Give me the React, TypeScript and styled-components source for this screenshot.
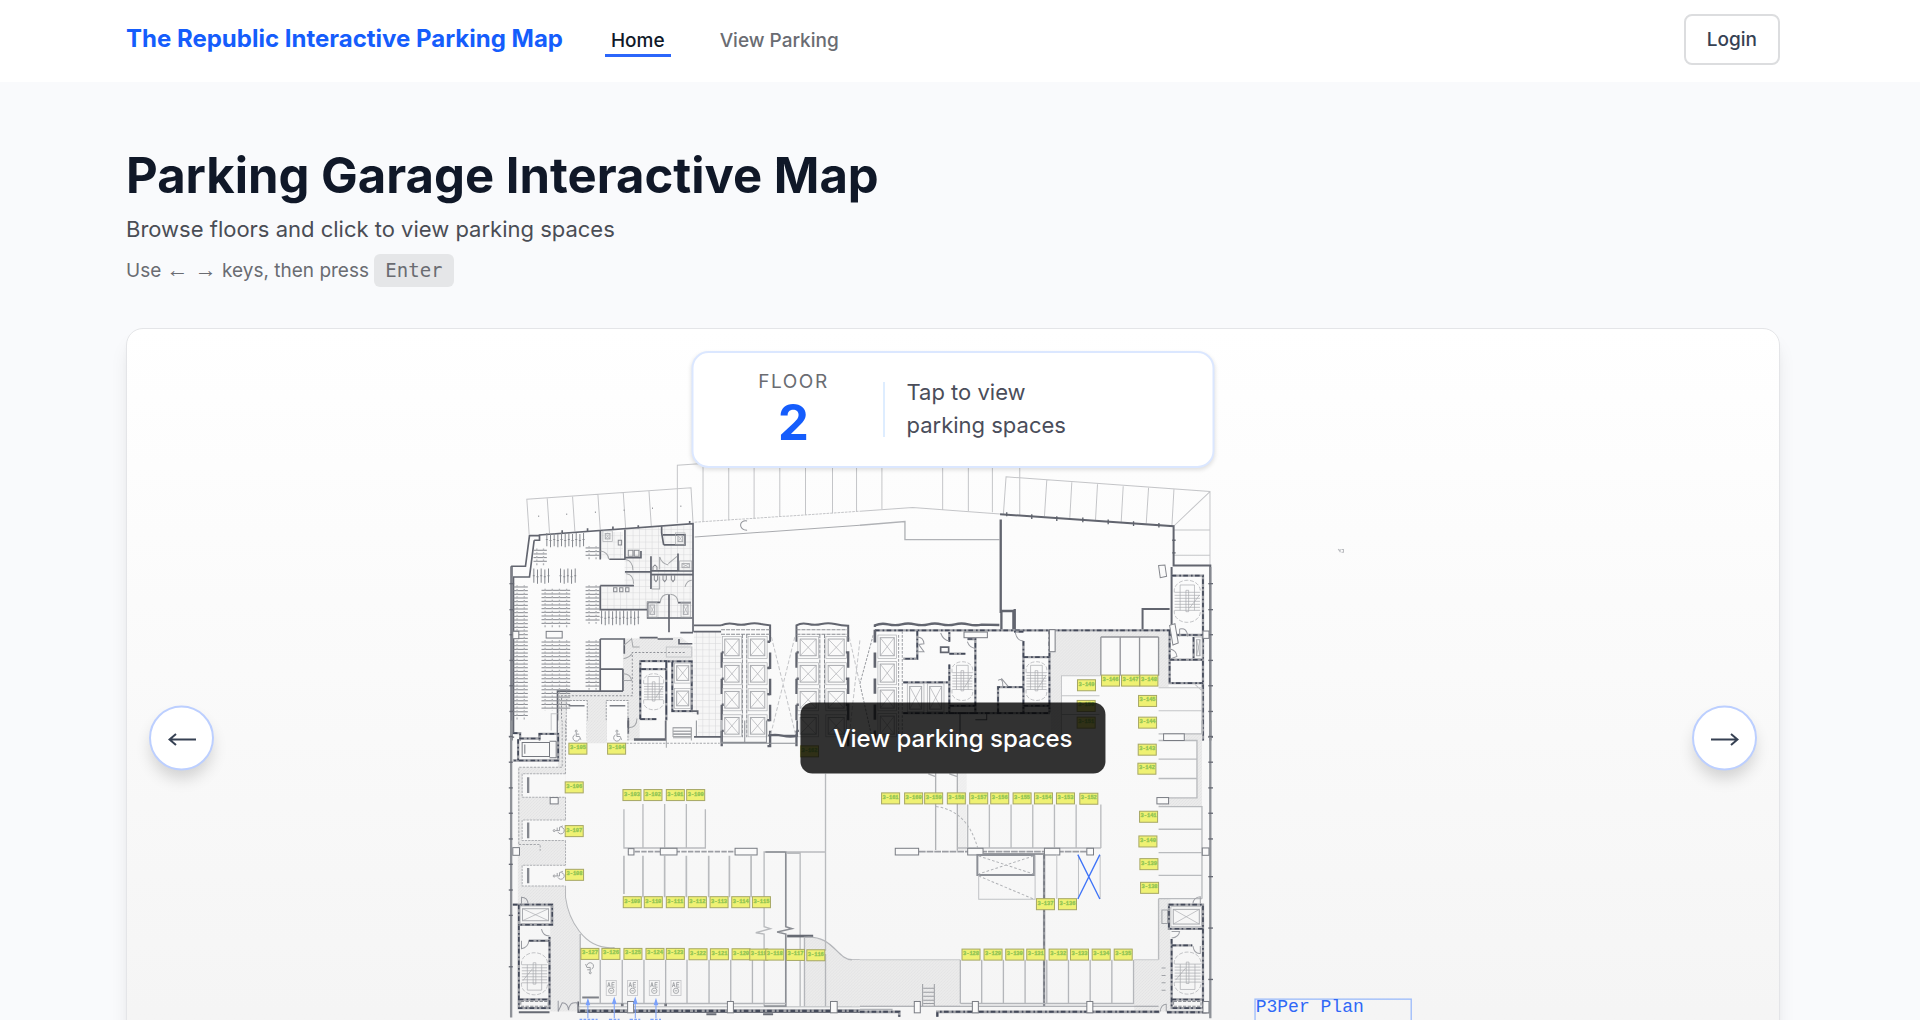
import React, { useState } from "react";
import styled, { createGlobalStyle } from "styled-components";

const GlobalStyle = createGlobalStyle`
  *, *::before, *::after { box-sizing: border-box; }
  body {
    margin: 0;
    background: #f9fafc;
    color: #101828;
    font-family: Inter, "Liberation Sans", sans-serif;
  }
  h1, p { margin: 0; }
  a { color: inherit; text-decoration: none; }
  button { font: inherit; color: inherit; cursor: pointer; }
`;

const Header = styled.header`
  display: flex;
  align-items: center;
  height: 82px;
  padding: 0 140px 4px 126px;
  background: #ffffff;
`;

const Brand = styled.a`
  color: #155dfc;
  font-size: 24px;
  line-height: 36px;
  font-weight: 700;
`;

const Nav = styled.nav`
  display: flex;
  flex: 1;
  gap: 43px;
  margin-left: 42px;
`;

const NavLink = styled.a<{ $active?: boolean }>`
  padding: 8px 6px 1px;
  border-bottom: 3px solid ${(p) => (p.$active ? "#2b66fb" : "transparent")};
  color: ${(p) => (p.$active ? "#101828" : "#6a6c72")};
  font-size: 19px;
  line-height: 24px;
  font-weight: 500;
`;

const LoginButton = styled.button`
  height: 51px;
  padding: 0 21px;
  border: 2px solid #dcdddf;
  border-radius: 8px;
  background: #ffffff;
  color: #364153;
  font-size: 19px;
  font-weight: 500;
`;

const Main = styled.main`
  padding: 66px 140px 66px 126px;
`;

const Intro = styled.div`
  display: flex;
  flex-direction: column;
  margin-bottom: 41px;
`;

const Title = styled.h1`
  font-size: 49px;
  line-height: 55px;
  font-weight: 700;
`;

const Subtitle = styled.p`
  margin-top: 10px;
  color: #4a4d55;
  font-size: 22px;
  line-height: 33px;
`;

const Hint = styled.p`
  margin-top: 8px;
  color: #6a6c72;
  font-size: 19px;
  line-height: 33px;
`;

const ArrowKeys = styled.span`
  font-family: "Liberation Sans", sans-serif;
  font-size: 22px;
  line-height: 1;
`;

const Key = styled.kbd`
  display: inline-block;
  padding: 0 11px;
  border-radius: 6px;
  background: #e5e6e8;
  font-family: "DejaVu Sans Mono", monospace;
  font-size: 19px;
`;

const Viewer = styled.section`
  position: relative;
  overflow: hidden;
  border: 1px solid #e4e5e8;
  border-radius: 17px;
  background: linear-gradient(#ffffff, #f3f3f3);
  box-shadow: 0 14px 20px -4px rgba(0, 0, 0, 0.1), 0 5px 8px -5px rgba(0, 0, 0, 0.1);
`;

const MapLink = styled.a`
  display: block;
`;

const Plan = styled.svg`
  display: block;
  width: 100%;
  height: auto;
`;

const FloorPanel = styled.div`
  position: absolute;
  top: 22px;
  left: 50%;
  transform: translateX(-50%);
  display: flex;
  align-items: center;
  width: 523px;
  height: 117px;
  padding-bottom: 1px;
  border: 2px solid #dbe7ff;
  border-radius: 17px;
  background: #ffffff;
  box-shadow: 0 2px 4px rgba(0, 0, 0, 0.12);
  pointer-events: none;
`;

const FloorLevel = styled.div`
  display: flex;
  flex-direction: column;
  align-items: center;
  width: 180px;
  margin-left: 10px;
`;

const FloorCaption = styled.span`
  color: #6a6c72;
  font-size: 19px;
  line-height: 27px;
  letter-spacing: 0.08em;
`;

const FloorNumber = styled.strong`
  color: #155dfc;
  font-size: 49px;
  line-height: 55px;
  font-weight: 700;
`;

const Divider = styled.span`
  width: 1px;
  height: 55px;
  background: #bedbff;
`;

const FloorPrompt = styled.p`
  width: 180px;
  margin-left: 22px;
  color: #4a4d5a;
  font-size: 22px;
  line-height: 33px;
`;

const ViewButton = styled.button`
  position: absolute;
  top: 50%;
  left: 50%;
  transform: translate(-50%, -50%);
  height: 71px;
  padding: 0 33px;
  border: 0;
  border-radius: 12px;
  background: rgba(0, 0, 0, 0.8);
  color: #ffffff;
  font-size: 24px;
  font-weight: 500;
  white-space: nowrap;
`;

const StepButton = styled.button<{ $side: "left" | "right" }>`
  position: absolute;
  top: 50%;
  ${(p) => p.$side}: 22px;
  transform: translateY(-50%);
  display: grid;
  place-items: center;
  width: 65px;
  height: 65px;
  padding: 0;
  border: 2px solid #bccfff;
  border-radius: 50%;
  background: #ffffff;
  color: #364153;
  box-shadow: 0 10px 16px -2px rgba(0, 0, 0, 0.16);
`;

/* ---------- floor plan ---------- */

const INK = "#434959";
const MID = "#85878d";
const PALE = "#c4c5c8";

type Box = { x: number; y: number; w: number; h: number };

const Wall = ({ d, w = 6 }: { d: string; w?: number }) => (
  <g fill="none">
    <path d={d} stroke="#9d9fa5" strokeWidth={w + 1} />
    <path d={d} stroke={INK} strokeWidth={w - 1} strokeDasharray="14 9 5 7" />
  </g>
);

const Solid = ({ d, w = 5 }: { d: string; w?: number }) => (
  <path d={d} fill="none" stroke="#62656f" strokeWidth={w} />
);

const Line = ({ d, w = 3, c = PALE, dash }: { d: string; w?: number; c?: string; dash?: string }) => (
  <path d={d} fill="none" stroke={c} strokeWidth={w} strokeDasharray={dash} />
);

const Lift = ({ x, y, w, h }: Box) => (
  <g fill="none" stroke="#a9abaf" strokeWidth={2}>
    <rect x={x} y={y} width={w} height={h} />
    <rect x={x + 7} y={y + 8} width={w - 14} height={h - 16} strokeWidth={3} />
    <path d={`M${x + 7} ${y + 8}L${x + w - 7} ${y + h - 8}M${x + w - 7} ${y + 8}L${x + 7} ${y + h - 8}`} />
  </g>
);

const Stair = ({ x, y, w, h, flip }: Box & { flip?: boolean }) => {
  const top = y + h * 0.32;
  const steps = Array.from({ length: 7 }, (_, i) => top + i * h * 0.06);
  const end = top + h * 0.36;
  const half = w / 2;
  return (
    <g fill="none" stroke="#a6a8ac" strokeWidth={2}>
      <path
        d={`M${x + 4} ${top}V${y + half}A${half - 4} ${half - 12} 0 0 1 ${x + w - 4} ${y + half}V${top}M${x + 4} ${end}V${y + h - half}A${half - 4} ${half - 12} 0 0 0 ${x + w - 4} ${y + h - half}V${end}`}
        strokeDasharray="12 5"
      />
      {steps.map((s) => (
        <path key={s} d={`M${x + 5} ${s}H${x + w - 5}`} />
      ))}
      <path d={`M${x + half - 4} ${top - 6}h8V${end + 4}h-8zM${x + w * 0.25} ${top}V${end}M${x + w * 0.75} ${top}V${end}`} />
      <path
        d={
          flip
            ? `M${x + 8} ${end - 6}L${x + half - 6} ${top + 12}M${x + w * 0.25} ${end}V${end + 22}H${x + w * 0.75}V${end}`
            : `M${x + half + 6} ${end - 6}L${x + w - 6} ${top + 8}M${x + w * 0.25} ${top}V${top - 22}H${x + w * 0.75}V${top}`
        }
      />
    </g>
  );
};

const Racks = ({ x, y, w, h, cols = 2 }: Box & { cols?: number }) => {
  const rows = Math.floor(h / 11);
  return (
    <g fill="none" stroke="#85878d" strokeWidth={3}>
      {Array.from({ length: rows }, (_, i) => (
        <path key={i} d={`M${x} ${y + 5 + i * 11}h${w}`} />
      ))}
      {Array.from({ length: cols * 2 }, (_, i) => (
        <path key={`c${i}`} d={`M${x + ((i + 0.5) * w) / (cols * 2)} ${y}v${h}`} strokeWidth={4} strokeDasharray="6 5" stroke="#b0b2b6" />
      ))}
    </g>
  );
};

const Bars = ({ x, y, w, h }: Box) => (
  <g fill="none" stroke="#85888e" strokeWidth={3}>
    {Array.from({ length: Math.floor(w / 11) + 1 }, (_, i) => (
      <path key={i} d={`M${x + i * 11} ${y + (i % 2) * 3}v${h}m-3 ${-h / 2}h6`} />
    ))}
  </g>
);

const Column = ({ x, y, w, h }: Box) => (
  <rect x={x} y={y} width={w} height={h} fill="#fafafa" stroke="#797c83" strokeWidth={3} />
);

const Wheelchair = ({ x, y, turn = 0 }: { x: number; y: number; turn?: number }) => (
  <g transform={`translate(${x} ${y}) rotate(${turn})`} fill="none" stroke="#8f9196" strokeWidth={2.5}>
    <circle cx={-2} cy={-16} r={3} />
    <path d="M-2-12V0H8L12 10M-2-7h9" />
    <path d="M-6-5A10 10 0 1 0 8 6" />
  </g>
);

const Charger = ({ x, y }: { x: number; y: number }) => (
  <g fill="none" stroke="#9b9da1" strokeWidth={2.5}>
    <rect x={x} y={y} width={30} height={45} stroke="#c4c5c8" />
    <path d={`M${x + 4} ${y + 20}l4-14 4 14m-6-5h5M${x + 25} ${y + 6}h-8v14h8m-8-7h7`} />
    <circle cx={x + 15} cy={y + 31} r={8} />
    <path d={`M${x + 11} ${y + 31}h8`} />
  </g>
);

const Tag = ({ x, y, n }: { x: number; y: number; n: number }) => (
  <g>
    <rect x={x} y={y} width={54} height={33} fill="#eff173" stroke="#a6a765" strokeWidth={3} />
    <text
      x={x + 27}
      y={y + 18}
      textAnchor="middle"
      fill="#7fba4c"
      stroke="#9aca58"
      strokeWidth={1}
      fontFamily="Liberation Mono, monospace"
      fontSize={16}
      fontWeight={700}
    >
      {`3-${n}`}
    </text>
  </g>
);

/* [x, y, space number] in plan units, three to a pixel */
const SPACES: [number, number, number][] = [
  [208, 908, 105], [324, 908, 104], [197, 1024, 106], [197, 1155, 107], [198, 1286, 108],
  [370, 1047, 103], [433, 1047, 102], [500, 1047, 101], [561, 1047, 100],
  [371, 1368, 109], [434, 1368, 110], [500, 1368, 111], [566, 1368, 112], [631, 1368, 113], [696, 1368, 114], [758, 1368, 115],
  [244, 1523, 127], [307, 1523, 126], [373, 1523, 125], [439, 1523, 124], [500, 1523, 123], [568, 1524, 122],
  [632, 1524, 121], [697, 1524, 120], [750, 1525, 119], [798, 1525, 118], [860, 1526, 117], [921, 1527, 116],
  [902, 916, 162],
  [1145, 1057, 161], [1214, 1057, 160], [1274, 1057, 159], [1342, 1057, 158], [1409, 1057, 157], [1472, 1057, 156],
  [1539, 1057, 155], [1603, 1057, 154], [1669, 1057, 153], [1739, 1058, 152],
  [1732, 718, 149], [1731, 780, 150], [1731, 830, 151],
  [1804, 704, 146], [1864, 704, 147], [1919, 704, 148],
  [1915, 765, 145], [1915, 830, 144], [1914, 911, 143], [1913, 968, 142], [1918, 1112, 141], [1916, 1186, 140],
  [1919, 1254, 139], [1921, 1325, 138],
  [1609, 1374, 137], [1675, 1374, 136],
  [1386, 1525, 128], [1452, 1525, 129], [1517, 1525, 130], [1580, 1525, 131], [1647, 1525, 132], [1711, 1525, 133],
  [1776, 1525, 134], [1842, 1525, 135],
];

const TopLeft = () => (
  <g>
    <Line d="M89 282L82 177L574 143L580 248M143 173L150 278M219 168L226 273M295 163L302 268M371 158L378 263M448 152L455 258" />
    <Line d="M533 249V75L620 69M610 80V244M687 80V240M763 80V236M840 80V230M917 80V224M998 80V219M1070 80V214" />
    <Line d="M116 228h3M200 222h3M286 216h3M372 210h3M457 204h3M542 198h3" w={4} c="#9a9ca0" />
    <Line d="M585 246L1080 213" dash="8 3" />
    <Line d="M585 290L1080 255" c="#a9abaf" />
    <Line d="M742 242C716 238 716 270 742 270" c="#8f9197" />
    <path d="M300 595H372V750H300ZM370 595L545 590L580 620V660H420V900H175V755H370Z" fill="url(#hatch)" />
    <path d="M380 265L578 255V535H444V508H302V440H375V352H380ZM303 275H370V355H303Z" fill="url(#tiles)" />
    <path d="M583 575H665V890H595V820H578Z" fill="url(#tiles)" />
    <path d="M302 596H370V750H302ZM198 780H263V900H198ZM320 780H385V900H320Z" fill="#fbfbfb" />
    <Solid d="M104 300H120V284L580 250V576M104 300L90 410H40M35 378H78L90 286H118M35 378V900M42 410V878H62V900" />
    <Line d="M38 380V900" w={5} c="#868990" />
    {[430, 508, 583, 660, 736, 813, 890].map((y) => (
      <Line key={y} d={`M30 ${y}h14`} w={4} c="#666973" />
    ))}
    <Solid d="M188 278v-8M264 274v-10M340 268v-9M416 264v-9M486 258V278L492 314M570 250v-8" w={5} />
    <Solid d="M302 270V358M329 357H376V268M376 352H424V332M454 348V392H580M376 395H454V446M454 403H580M302 436H403M302 436V508H444V486H482M444 508V533H578M508 462V576M535 340V392M490 284H556V314H492M535 487H574" />
    <Solid d="M302 596H374V640M302 596V750M302 686H370M370 685V752M420 592H474M474 596H520M538 596V610H578M542 577H580M174 900V752H370M386 832V880M120 900V880H176" />
    <Wall d="M422 836V662H500V838M422 836H470M425 686H500M518 665V812H576V663H504M500 668V840" w={6} />
    <Line d="M186 900V766H398V636H556" c="#8f9197" dash="6 5" />
    <Line d="M500 620H576V650H500ZM155 870V820H174" />
    <Bars x={142} y={278} w={110} h={40} />
    <Bars x={103} y={385} w={44} h={42} />
    <Bars x={183} y={385} w={44} h={42} />
    <Bars x={306} y={510} w={110} h={42} />
    <Racks x={102} y={325} w={40} h={50} cols={1} />
    <Racks x={258} y={318} w={42} h={40} cols={1} />
    <Racks x={42} y={435} w={43} h={405} cols={1} />
    <Racks x={126} y={445} w={86} h={120} />
    <Racks x={126} y={600} w={86} h={210} />
    <Racks x={258} y={435} w={42} h={115} cols={1} />
    <Racks x={258} y={600} w={42} h={148} cols={1} />
    <Column x={140} y={573} w={48} h={20} />
    <Column x={40} y={573} w={18} h={22} />
    <Lift x={310} y={272} w={28} h={32} />
    <Lift x={528} y={278} w={28} h={34} />
    <Lift x={540} y={362} w={36} h={28} />
    <Lift x={444} y={486} w={28} h={44} />
    <Lift x={544} y={486} w={28} h={44} />
    <Line d="M386 330h14v18h-14zM404 330h14v18h-14zM342 442h10v12h-10zM360 442h10v12h-10zM378 442h10v12h-10zM356 300h10v14h-10zM464 404v14l5 6 5-6v-14M490 404v14l5 6 5-6v-14M515 404v14l5 6 5-6v-14M460 390v-10l6-6 6 6v10" c="#888a90" />
    <Line d="M303 332Q325 335 328 357M378 358Q400 362 400 390M380 400Q402 402 402 430M482 486Q484 462 506 462M512 462Q534 464 535 486M556 440Q562 420 576 420M480 350Q486 370 506 374M372 615Q392 600 396 595L400 620H420M372 655Q392 650 396 640M372 700Q392 700 396 720H372M388 862Q412 860 412 834" c="#a5a7aa" />
    <Line d="M480 350V388M506 370L532 348M456 446H480V408" c="#a5a7aa" />
    <Stair x={428} y={688} w={68} h={132} />
    <Lift x={524} y={668} w={50} h={60} />
    <Lift x={524} y={744} w={50} h={60} />
    <Line d="M200 900V780H263V900M320 900V780H385V900" c="#9c9ea3" dash="7 3" />
    <Line d="M207 796H255M330 796H377" w={5} c="#7b7e85" />
    <Wheelchair x={232} y={888} />
    <Wheelchair x={354} y={888} />
    <Line d="M520 862H575M520 872H575M520 882H575M520 892H575M575 862V900" c="#a5a7aa" />
    <Solid d="M403 896H498M583 555H664M583 574H664M574 812H594V822" />
    <Solid d="M664 555Q684 546 704 551T744 551T784 551L811 555V604M890 604V555Q905 546 925 551T965 551T1005 551T1045 556V604" w={6} />
    <Line d="M664 568H811M664 582H811M890 568H1045M890 582H1045M728 582V890M741 582V890M960 582V790M974 582V790" c="#8a8d93" dash="12 3" />
    {[0, 79, 157, 235].map((o) => (
      <g key={o}>
        <Lift x={668} y={588 + o} w={57} h={66} />
        <Lift x={745} y={588 + o} w={57} h={66} />
        <Lift x={894} y={588 + o} w={62} h={66} />
        <Lift x={978} y={588 + o} w={62} h={66} />
        <Solid d={`M666 ${636 + o}v46M672 ${636 + o}h-6M803 ${604 + o}h8M811 ${636 + o}v46h-8M890 ${636 + o}h7M890 ${636 + o}v46M1038 ${636 + o}h7v46`} w={7} />
      </g>
    ))}
    <Line d="M815 590L888 885M885 590L812 885M1048 590L1080 730M1080 600L1048 885" dash="12 6" />
    <Solid d="M806 886Q824 880 848 886T894 886" w={6} />
  </g>
);

const TopRight = () => (
  <g transform="translate(1080 0)">
    <Line d="M66 80V206M248 80V208M325 80V212M397 80V216M479 80V226M0 213L158 202L420 221" />
    <Line d="M0 255L135 244V298H418" w={4} c="#b0b2b6" />
    <Line d="M430 222L438 110L1049 154V378M560 120L553 228M635 126L629 233M712 132L706 239M789 138L783 245M865 143L858 250M941 148L935 256M1049 154L940 258M941 269H1049M941 345H1049" />
    <Solid d="M420 222L940 258V376H1050V900" w={6} />
    <Line d="M440 216v12M515 222v14M590 228v14M668 232v14M744 238v14M820 243v14M896 248v14M936 300h10M936 338h10" w={4} c="#5e626c" />
    <Solid d="M422 238V518M45 560V555Q64 547 85 552T125 552T165 552T205 552T245 552T285 552T325 552T365 553L418 554M422 512H460V568M464 506V568M424 512V568" w={7} />
    <Solid d="M928 506H847V568M934 380V584" w={6} />
    <path d="M585 575H925V740H895V590H720V705H604V900H572V635H585Z" fill="url(#hatch)" />
    <path d="M720 590H895V706H720Z" fill="#fafafa" />
    <Wall d="M45 570H930M934 406H1028V900M568 568V815M928 584H1028M928 572V728H1028M928 658H1028" w={6} />
    <Line d="M1050 380V900" w={6} c="#868990" />
    {[430, 508, 583, 660, 736, 813, 890].map((y) => (
      <Line key={y} d={`M1044 ${y}h14`} w={4} c="#666973" />
    ))}
    <Wall d="M172 572V655H130M130 726H268M268 604V575M268 640H316M268 672V818H346V596H322M130 818H570M490 602V815M490 650H568M414 818V740H490M490 574H462M1000 590V655M268 796H346M490 796H568" />
    <Solid d="M45 568V606M45 636V682M45 714V760M45 792V838M45 870V900" w={8} />
    {[0, 79, 157, 235].map((o) => (
      <Lift key={o} x={54} y={584 + o} w={56} h={70} />
    ))}
    <Line d="M116 584V890M127 572V890M40 584L0 730L36 890" dash="8 4" c="#9c9ea3" />
    <Lift x={142} y={730} w={50} h={84} />
    <Lift x={202} y={730} w={50} h={84} />
    <Stair x={272} y={652} w={70} h={140} />
    <Stair x={494} y={652} w={70} h={140} />
    <Stair x={938} y={408} w={86} h={150} />
    <Line d="M172 590Q190 590 192 610L176 612L192 634H172M242 578Q250 600 268 602M322 604Q328 622 346 624M466 578Q470 600 490 602M414 720Q430 710 428 740M444 738L424 714M958 566Q980 560 982 588M958 566V588M930 626Q948 630 950 648L930 656" c="#989aa0" />
    <Column x={312} y={575} w={70} h={17} />
    <Column x={568} y={568} w={17} h={66} />
    <path d="M895 376L914 374L919 408L900 412ZM928 555L944 550L954 608L938 614Z" fill="#fafafa" stroke={MID} strokeWidth={3} />
    <Lift x={1002} y={590} w={24} h={64} />
    <Solid d="M242 620H266V636H242Z" />
    <Line d="M722 590V706M780 590V706M838 590V706M895 590V706M722 590H895" c="#929499" w={4} />
    <Line d="M604 900V706H722M604 766H718M604 822H718M895 742H1025V900M895 811H1025M1024 730V750L1004 732" />
    <Column x={1028} y={572} w={18} h={22} />
    <Solid d="M300 820V900M346 838H380V820" w={3} />
  </g>
);

const BottomLeft = () => (
  <g transform="translate(0 840)">
    <path d="M55 140H198V530Q208 600 242 640V872H152V552H55ZM262 0H322V68H262ZM175 0H198V160H175Z" fill="url(#hatch)" />
    <path d="M912 650C1000 640 1010 716 1056 717H1080V856H912Z" fill="url(#hatch)" />
    <path d="M68 160H198V230H68ZM68 298H198V360H68ZM68 434H198V496H68Z" fill="#f8f8f8" />
    <Line d="M35 0V890" w={7} c="#8f9298" />
    {[48, 125, 202, 278, 355, 431, 508, 584, 738].map((y) => (
      <Line key={y} d={`M28 ${y}h12`} w={4} c="#666973" />
    ))}
    <Wall d="M40 38H62V54H120V40H176V120H40M56 56V120" />
    <Line d="M68 66H150V108H68ZM76 72V100M150 62H170V112H150" c="#75787f" />
    <Line d="M58 370V140H188V0M58 372H122V390M198 0V160M380 68H660" c="#a5a7ab" dash="7 4" />
    <Line d="M198 160H68V230H198M198 298H68V360H198M198 434H68V496H198M198 230V298M198 360V434" c="#adafb3" dash="7 3" />
    <Line d="M198 496V530C206 590 250 690 345 680" c="#b6b8bb" />
    <Line d="M86 170V217M86 306V353M86 442V488" w={7} c="#85888f" />
    <Wheelchair x={180} y={328} turn={-90} />
    <Wheelchair x={180} y={464} turn={-90} />
    <Column x={152} y={231} w={24} h={19} />
    <Column x={40} y={381} w={20} h={23} />
    <Wall d="M40 552H158V612H58V862H150V648M58 552V612M88 660H150M58 836H150" />
    <Lift x={62} y={556} w={92} h={52} />
    <Line d="M126 625Q130 645 150 646M66 552V530Q84 530 86 550M66 660V684Q86 680 88 660" c="#989aa0" />
    <Stair x={62} y={684} w={86} h={150} flip />
    <Line d="M64 842H146V856H64Z" dash="10 4" c="#8a8d93" />
    <Line d="M373 266V382H617V266M430 250V382M495 250V382M560 250V382" c="#b9bbbe" w={4} />
    <Line d="M373 520V405M430 405V530M495 405V530M560 405V530M627 405V530M689 405V530M754 405V530" c="#b9bbbe" w={5} />
    <Line d="M385 393H770" w={5} c="#9b9da3" dash="16 4" />
    <Column x={386} y={384} w={17} h={19} />
    <Column x={482} y={383} w={50} h={20} />
    <Column x={706} y={383} w={66} h={20} />
    <Line d="M793 856V640L768 636L812 624L793 618V394H856M977 160V690M862 398H901V856M860 394H977" c="#b9bbbe" w={4} />
    <Line d="M793 856H858V640L832 634L876 624L858 618V394H797" c="#8b8e94" w={5} />
    <Line d="M862 646H940" w={8} c="#666a73" />
    <Line d="M914 650V856M977 700V856M912 650C1000 640 1010 716 1056 717H1080" c="#b4b6ba" w={4} />
    <Line d="M242 640V850M302 717V850M368 717V850M433 717V850M498 717V850M562 717V850M628 717V850M693 717V850M758 717V850M242 848H858" c="#b4b6ba" w={4} />
    <Line d="M236 858H1080" c="#9c9ea3" w={2} />
    <Solid d="M236 842V874H1080" w={5} />
    <Wall d="M242 870H1080" w={8} />
    <Line d="M58 874H150M620 880H650M790 880H820" w={6} c="#676b74" />
    <Line d="M176 840V872L188 846Q205 846 207 868Q210 842 232 846L240 872" c="#9698a0" />
    <Column x={384} y={842} w={18} h={34} />
    <Column x={683} y={842} w={18} h={34} />
    <Column x={992} y={842} w={20} h={34} />
    <Line d="M364 852h8M494 852h8" w={8} c="#777a81" />
    <Line d="M248 830H298" w={6} c="#7f8289" />
    <Wheelchair x={270} y={740} turn={180} />
    <Charger x={320} y={779} />
    <Charger x={384} y={779} />
    <Charger x={449} y={779} />
    <Charger x={514} y={779} />
    <path d="M265 892V842m-5 10l5-16 5 16zM344 892V838m-5 10l5-16 5 16zM407 892V838m-5 10l5-16 5 16zM469 892V842m-5 10l5-16 5 16z" fill="#7ba1fa" stroke="#7ba1fa" strokeWidth={3} />
    <path d="M240 896H292V930H246ZM330 896H358V930H330ZM392 896H420V930H392ZM454 896H482V930H454Z" fill="none" stroke="#7ba1fa" strokeWidth={4} strokeDasharray="8 4" />
    <Line d="M590 0V48M664 0V65H800V0M735 0V65M664 68H890" c="#8b8e94" />
    <Solid d="M403 58H498V0M583 49H664M806 45H892V0M386 0V22" />
    <Line d="M520 22H575V48H520ZM520 32H575M520 40H575M500 0V82" c="#a5a7aa" />
  </g>
);

const BottomRight = () => (
  <g transform="translate(1080 840)">
    <path d="M-24 717H300V856H-24ZM822 717H895V534H930V872H822ZM1010 60H975V40H1025V258H895V232H1010Z" fill="url(#hatch)" />
    <path d="M292 158H320V390H292Z" fill="url(#hatch)" opacity={0.6} />
    <Line d="M1050 0V892" w={7} c="#8f9298" />
    {[48, 125, 202, 278, 355, 468, 622, 776].map((y) => (
      <Line key={y} d={`M1044 ${y}h14`} w={4} c="#666973" />
    ))}
    <Line d="M895 40H1025V0M895 60H1010V232H925M895 116H1010M895 174H1010M895 258H1025V534M895 326H1025M895 396H1025M895 464H1025M895 534V717M895 534H1025" c="#b9bbbe" w={4} />
    <Column x={910} y={40} w={62} h={20} />
    <Column x={890} y={231} w={35} h={19} />
    <Line d="M227 158V388M292 158V390M205 160L227 168M268 160L292 168" c="#b0b2b5" w={4} />
    <Line d="M228 258Q325 270 355 390" c="#b3b5b8" dash="8 6" />
    <Line d="M323 252V382M388 252V382M453 252V382M518 252V382M583 252V382M648 252V382M722 252V382M292 382H722" c="#b9bbbe" w={4} />
    <Line d="M108 393H700" w={5} c="#9b9da3" dash="20 3" />
    <Line d="M370 400H555" w={5} c="#7c7f86" />
    <Column x={106} y={383} w={70} h={20} />
    <Column x={323} y={383} w={46} h={20} />
    <Column x={553} y={383} w={46} h={20} />
    <Column x={680} y={383} w={20} h={20} />
    <Column x={1026} y={382} w={20} h={22} />
    <rect x={352} y={403} width={170} height={60} fill="none" stroke="#8c8f96" strokeWidth={6} />
    <Line d="M356 406L520 460M520 406L356 460M356 466L520 535" c="#b0b2b6" dash="8 6" />
    <Line d="M356 464V536H525V404M590 400V535M655 404V535M720 404V535" c="#c0c2c5" />
    <Line d="M552 402V856" w={7} c="#94979d" />
    <Line d="M552 402V856" w={3} c="#6a6e77" dash="12 8" />
    <path d="M653 402L719 535M719 402L653 535" stroke="#3f74f8" strokeWidth={4} />
    <Line d="M0 717H300M822 717H895" c="#c8c9cb" />
    <Line d="M301 717V848M365 717V848M430 717V848M495 717V848M560 717V848M625 717V848M690 717V848M755 717V848M820 717V848M301 848H822" c="#b4b6ba" w={4} />
    <Line d="M188 790V856M223 790V856M190 802H222M190 814H222M190 826H222M190 838H222M190 848H222M0 856H895" c="#9b9da2" />
    <Line d="M0 866H98" w={4} c="#b0b2b6" />
    <Wall d="M0 873H118V888M232 888V873H898M920 874H1046" w={7} />
    <Column x={163} y={842} w={18} h={34} />
    <Column x={337} y={842} w={18} h={34} />
    <Column x={680} y={842} w={18} h={34} />
    <Wall d="M926 552H1028V624H926ZM1028 624V862H934V655M934 674H996M934 836H1028" />
    <Lift x={932} y={558} w={92} h={60} />
    <Stair x={938} y={682} w={88} h={150} flip />
    <Line d="M940 842H1022V856H940Z" dash="10 4" c="#8a8d93" />
    <Line d="M934 632H958Q956 650 934 652M998 548Q1000 530 1020 528V550M998 676Q1002 700 1020 698V676M905 568H922V608H905ZM904 742h12M904 764h12M904 786h12M904 808h12M900 872Q902 850 918 850V872" c="#a0a2a7" />
    <Column x={1028} y={842} w={18} h={34} />
  </g>
);

const FloorPlan = () => (
  <Plan viewBox="-1116 -333 4950 2451" role="img" aria-label="Floor 2 parking plan">
    <defs>
      <pattern id="hatch" width="9" height="9" patternUnits="userSpaceOnUse">
        <rect width="9" height="9" fill="#ebebeb" />
        <path d="M0 9L9 0" stroke="#dfdfe0" strokeWidth="2" />
      </pattern>
      <pattern id="tiles" width="19" height="19" patternUnits="userSpaceOnUse">
        <rect width="19" height="19" fill="#f6f6f6" />
        <path d="M0 0H19M0 0V19" stroke="#d6d7d9" strokeWidth="3" fill="none" />
      </pattern>
    </defs>
    <TopLeft />
    <TopRight />
    <BottomLeft />
    <BottomRight />
    {SPACES.map(([x, y, n]) => (
      <Tag key={n} x={x} y={y} n={n} />
    ))}
    <path d="M2513 326l6 8m0-8v10m4-8h6v8h-6" stroke="#b9bbbf" strokeWidth={3} fill="none" />
    <rect x={2264} y={1675} width={468} height={140} fill="none" stroke="#9dbcfb" strokeWidth={4} />
    <text x={2266} y={1713} fill="#2f68f7" fontFamily="Liberation Mono, monospace" fontSize={54}>
      P3Per Plan
    </text>
  </Plan>
);

const Arrow = ({ flip }: { flip?: boolean }) => (
  <svg width="28" height="28" viewBox="0 0 28 28" fill="none" stroke="currentColor" strokeWidth="2" aria-hidden="true">
    <path d={flip ? "M0 16H26M20 10.500L26.500 16L20 21.500" : "M28 16H2M8 10.500L1.500 16L8 21.500"} />
  </svg>
);

export default function App() {
  const [floor, setFloor] = useState(2);
  return (
    <>
      <GlobalStyle />
      <Header>
        <Brand href="#home">The Republic Interactive Parking Map</Brand>
        <Nav aria-label="Main">
          <NavLink href="#home" $active aria-current="page">Home</NavLink>
          <NavLink href="#parking">View Parking</NavLink>
        </Nav>
        <LoginButton type="button">Login</LoginButton>
      </Header>
      <Main>
        <Intro>
          <Title>Parking Garage Interactive Map</Title>
          <Subtitle>Browse floors and click to view parking spaces</Subtitle>
          <Hint>
            Use <ArrowKeys>← →</ArrowKeys> keys, then press <Key>Enter</Key>
          </Hint>
        </Intro>
        <Viewer aria-label="Floor browser">
          <MapLink href="#floor">
            <FloorPlan />
          </MapLink>
          <FloorPanel>
            <FloorLevel>
              <FloorCaption>FLOOR</FloorCaption>
              <FloorNumber>{floor}</FloorNumber>
            </FloorLevel>
            <Divider />
            <FloorPrompt>Tap to view parking spaces</FloorPrompt>
          </FloorPanel>
          <ViewButton type="button">View parking spaces</ViewButton>
          <StepButton type="button" $side="left" aria-label="Previous floor" onClick={() => setFloor((f) => Math.max(1, f - 1))}>
            <Arrow />
          </StepButton>
          <StepButton type="button" $side="right" aria-label="Next floor" onClick={() => setFloor((f) => f + 1)}>
            <Arrow flip />
          </StepButton>
        </Viewer>
      </Main>
    </>
  );
}
